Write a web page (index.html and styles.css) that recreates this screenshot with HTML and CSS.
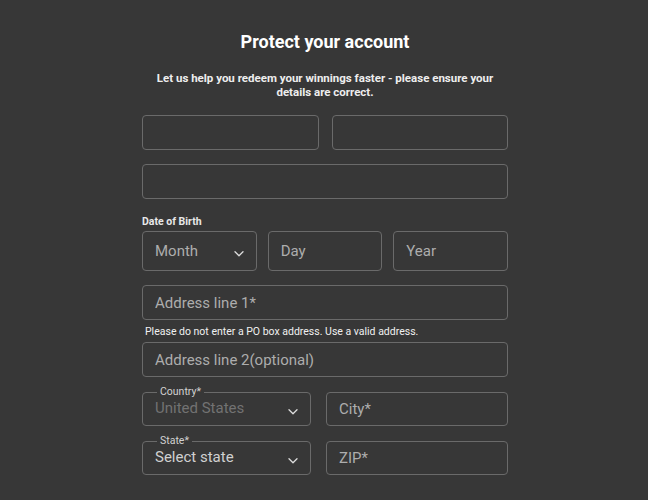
FILE: index.html
```html
<!DOCTYPE html>
<html lang="en">
<head>
<meta charset="utf-8">
<title>Protect your account</title>
<link rel="stylesheet" href="styles.css">
</head>
<body>
<main class="wrap">
  <h1 class="title">Protect your account</h1>
  <p class="subtitle">Let us help you redeem your winnings faster - please ensure your details are correct.</p>

  <form class="form">
    <div class="row two">
      <input class="field" type="text" aria-label="First name">
      <input class="field" type="text" aria-label="Last name">
    </div>

    <input class="field row-gap" type="text" aria-label="Email">

    <div class="dob-label">Date of Birth</div>
    <div class="row three">
      <div class="field select tall">
        <span class="ph">Month</span>
        <svg class="chev" width="10" height="6" viewBox="0 0 10 6"><path d="M1 0.8 L5 4.8 L9 0.8"/></svg>
      </div>
      <input class="field tall" type="text" placeholder="Day">
      <input class="field tall" type="text" placeholder="Year">
    </div>

    <input class="field addr1" type="text" placeholder="Address line 1*">
    <div class="note">Please do not enter a PO box address. Use a valid address.</div>
    <input class="field addr2" type="text" placeholder="Address line 2(optional)">

    <div class="row geo first">
      <fieldset class="fs">
        <legend>Country*</legend>
        <div class="fs-body">
          <span class="val muted">United States</span>
          <svg class="chev low" width="10" height="6" viewBox="0 0 10 6"><path d="M1 0.8 L5 4.8 L9 0.8"/></svg>
        </div>
      </fieldset>
      <input class="field short" type="text" placeholder="City*">
    </div>

    <div class="row geo">
      <fieldset class="fs">
        <legend>State*</legend>
        <div class="fs-body">
          <span class="val light">Select state</span>
          <svg class="chev low" width="10" height="6" viewBox="0 0 10 6"><path d="M1 0.8 L5 4.8 L9 0.8"/></svg>
        </div>
      </fieldset>
      <input class="field short" type="text" placeholder="ZIP*">
    </div>
  </form>
</main>
</body>
</html>
```

FILE: styles.css
```css
html, body {
  height: 100%;
}

body {
  margin: 0;
  padding: 0 0 0 2px;
  background: #373737;
  font-family: Roboto, "Liberation Sans", Arial, sans-serif;
  color: #f2f2f2;
}

.wrap {
  width: 366px;
  margin: 0 auto;
  padding-top: 31px;
}

.title {
  margin: 0;
  font-size: 18px;
  line-height: 22px;
  font-weight: 700;
  color: #ffffff;
  text-align: center;
}

.subtitle {
  margin: 18px 0 0;
  font-size: 11.5px;
  line-height: 14px;
  font-weight: 700;
  color: #eeeeee;
  text-align: center;
}

.form {
  margin-top: 16px;
  display: flex;
  flex-direction: column;
}

.row {
  display: grid;
}

.two {
  grid-template-columns: 1fr 1fr;
  gap: 13px;
}

.three {
  grid-template-columns: 1fr 1fr 1fr;
  gap: 11px;
  margin-top: 3px;
}

.field {
  box-sizing: border-box;
  height: 35px;
  width: 100%;
  margin: 0;
  padding: 0 12px;
  background: transparent;
  border: 1px solid #6a6a6a;
  border-radius: 4px;
  font-family: Roboto, "Liberation Sans", Arial, sans-serif;
  font-size: 15px;
  color: #e6e6e6;
  outline: none;
}

.field::placeholder {
  color: #adadad;
  opacity: 1;
}

.row-gap {
  margin-top: 14px;
}

.dob-label {
  margin-top: 16px;
  font-size: 10.5px;
  line-height: 13px;
  font-weight: 700;
  color: #e8e8e8;
}

.tall {
  height: 40px;
}

.select {
  display: flex;
  align-items: center;
  justify-content: space-between;
  padding-right: 12px;
}

.ph {
  color: #adadad;
  line-height: 18px;
}

.chev {
  display: block;
  fill: none;
  stroke: #dcdcdc;
  stroke-width: 1.3;
  stroke-linecap: round;
  stroke-linejoin: round;
  margin-top: 5px;
}

.addr1 {
  margin-top: 14px;
}

.note {
  margin-top: 5px;
  padding-left: 3px;
  font-size: 10.5px;
  line-height: 13px;
  color: #f0f0f0;
}

.addr2 {
  margin-top: 4px;
}

.geo {
  grid-template-columns: 169px 1fr;
  gap: 15px;
  align-items: end;
  margin-top: 9px;
}

.fs {
  margin: 0;
  min-width: 0;
  padding: 1px 12px 8px 12px;
  border: 1px solid #6a6a6a;
  border-radius: 4px;
}

.fs legend {
  margin-left: 2px;
  padding: 0 3px;
  font-size: 10.5px;
  line-height: 12px;
  color: #d2d2d2;
}

.fs-body {
  display: flex;
  align-items: center;
  justify-content: space-between;
  height: 18px;
  font-size: 15px;
  line-height: 18px;
}

.muted {
  color: #727272;
}

.light {
  color: #d0d0d0;
}

.chev.low {
  margin-top: 8px;
}

.short {
  height: 34px;
}
```
